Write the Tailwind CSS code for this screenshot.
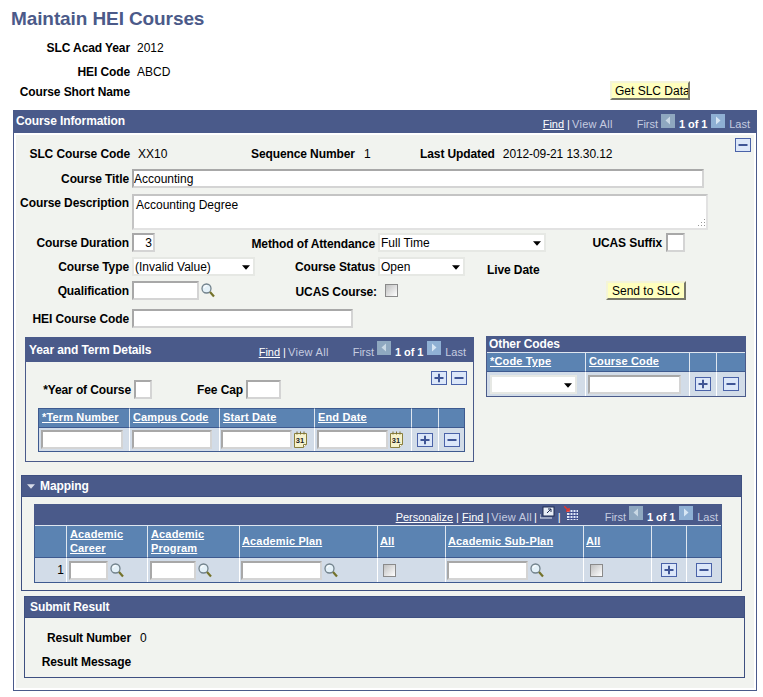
<!DOCTYPE html>
<html lang="en">
<head>
  <meta charset="UTF-8">
  <title>Maintain HEI Courses</title>
  <script src="https://cdn.jsdelivr.net/npm/@tailwindcss/browser@4"></script>
</head>
<body class="bg-white w-[763px] h-[697px] overflow-hidden font-['Liberation_Sans',Arial,sans-serif] text-xs leading-[14px] text-black [&_.font-bold]:tracking-[-0.1px] [&_thead]:text-[11px] [&_thead.font-bold]:tracking-[0.15px] [&_th]:pb-[2px]">

<svg class="hidden">
  <symbol id="mag" viewBox="0 0 14 15">
    <circle cx="5.5" cy="5.5" r="4.5" fill="#e4f1f8" stroke="#72828c" stroke-width="1.3"/>
    <path d="M3 5a3 3 0 0 1 3-2.500" fill="none" stroke="#fff"/>
    <path d="M9 9l4 4.500" stroke="#74722a" stroke-width="2.200"/>
  </symbol>
  <symbol id="plus" viewBox="0 0 16 14">
    <rect x=".5" y=".5" width="15" height="13" fill="#dce7f9" stroke="#4a62a8"/>
    <path d="M3.500 7h9M8 2.800v8.400" stroke="#3f5596" stroke-width="2"/>
  </symbol>
  <symbol id="minus" viewBox="0 0 16 14">
    <rect x=".5" y=".5" width="15" height="13" fill="#dce7f9" stroke="#4a62a8"/>
    <path d="M3.500 7h9" stroke="#3f5596" stroke-width="2"/>
  </symbol>
  <symbol id="prev" viewBox="0 0 14 14">
    <rect width="14" height="14" fill="#8fa8c0"/>
    <path d="M9 2.500v8l-4.500-4z" fill="#c9d8e4"/>
  </symbol>
  <symbol id="next" viewBox="0 0 14 14">
    <rect width="14" height="14" fill="#8fb0d4"/>
    <path d="M5 2.500v8l4.500-4z" fill="#d7e6f4"/>
  </symbol>
  <symbol id="down" viewBox="0 0 9 5">
    <path d="M0 0h9l-4.500 5z" fill="#000"/>
  </symbol>
  <symbol id="cal" viewBox="0 0 13 17">
    <path d="M.5 2.500h12v11l-3 3H.5z" fill="#f6f2cc" stroke="#8a7f3e"/>
    <path d="M3 .5v3M6.500 .5v3M10 .5v3" stroke="#7a6f34"/>
    <path d="M9.500 16.500v-3h3" fill="#fff" stroke="#8a7f3e"/>
    <text x="6" y="12" text-anchor="middle" font-size="7.500" font-weight="700" fill="#222">31</text>
  </symbol>
</svg>

<h1 class="pl-[11px] pt-[8px] h-[41px] text-[19px] leading-[21px] font-bold text-[#4b5a89]">Maintain HEI Courses</h1>

<div class="flex h-[24px]"><span class="w-[130px] text-right font-bold">SLC Acad Year</span><span class="ml-[7px]">2012</span></div>
<div class="flex h-[16px]"><span class="w-[130px] text-right font-bold">HEI Code</span><span class="ml-[7px]">ABCD</span></div>
<div class="flex h-[29px] items-start">
  <span class="w-[130px] mt-[4px] text-right font-bold">Course Short Name</span>
  <button class="ml-[480px] w-[80px] h-[19px] pl-[3px] text-left overflow-hidden whitespace-nowrap bg-[#ffffbe] border-2 border-t-[#f4f4d8] border-l-[#f4f4d8] border-r-[#77776a] border-b-[#77776a]">Get SLC Data</button>
</div>

<!-- Course Information -->
<section class="ml-[13px] w-[744px] h-[581px] border-x border-b border-[#4a5a8a]">
  <header class="-mx-px h-[23px] bg-[#4a5a8a] flex text-white">
    <span class="pl-[3px] pt-[4px] font-bold">Course Information</span>
    <nav class="ml-auto mr-[7px] mt-[7px] flex items-start text-[11px] leading-[14px] text-[#c6cce0]">
      <a class="underline text-white">Find</a><span class="ml-[3px] text-white">|</span><span class="ml-[2px] tracking-[0.3px]">View All</span>
      <span class="ml-[24px]">First</span><svg class="ml-[3px] -mt-[3px] w-[14px] h-[14px]"><use href="#prev"/></svg>
      <span class="ml-[4px] font-bold text-white">1 of 1</span><svg class="ml-[4px] -mt-[3px] w-[14px] h-[14px]"><use href="#next"/></svg>
      <span class="ml-[4px]">Last</span>
    </nav>
  </header>

  <div class="mx-[2px] mt-[2px] h-[553px] bg-[#f1f3ef]">
    <div class="flex h-[34px] pt-[3px]">
      <span class="w-[114px] mt-[9px] text-right font-bold">SLC Course Code</span>
      <span class="w-[121px] mt-[9px] pl-[8px]">XX10</span>
      <span class="w-[169px] mt-[9px] font-bold">Sequence Number<span class="ml-[9px] font-normal">1</span></span>
      <span class="w-[315px] mt-[9px] font-bold">Last Updated<span class="ml-[8px] font-normal">2012-09-21 13.30.12</span></span>
      <svg class="w-[16px] h-[14px]"><use href="#minus"/></svg>
    </div>

    <div class="flex items-center h-[19px]">
      <label class="w-[113px] text-right font-bold">Course Title</label>
      <input value="Accounting" class="ml-[3px] w-[572px] h-[19px] border-2 border-t-[#a8a8a8] border-l-[#a8a8a8] border-r-[#d4d4d4] border-b-[#d4d4d4] bg-white">
    </div>

    <div class="flex mt-[6px] h-[36px]">
      <label class="w-[113px] mt-[2px] text-right font-bold">Course Description</label>
      <div class="relative ml-[3px] w-[576px] h-[36px] pl-[2px] pt-[2px] border-2 border-t-[#c4c4c4] border-l-[#c4c4c4] border-r-[#e2e2e2] border-b-[#e2e2e2] bg-white">Accounting Degree
        <svg class="absolute right-0 bottom-0 w-[10px] h-[10px]" viewBox="0 0 10 10"><path d="M8 1h1v1H8zM5 4h1v1H5zM8 4h1v1H8zM2 7h1v1H2zM5 7h1v1H5zM8 7h1v1H8z" fill="#999"/></svg>
      </div>
    </div>

    <div class="flex items-center mt-[3px] h-[19px]">
      <label class="w-[113px] text-right font-bold">Course Duration</label>
      <input value="3" class="ml-[3px] w-[23px] h-[19px] pr-[1px] text-right border-2 border-t-[#a8a8a8] border-l-[#a8a8a8] border-r-[#d4d4d4] border-b-[#d4d4d4] bg-white">
      <label class="w-[220px] mt-[2px] text-right font-bold">Method of Attendance</label>
      <div class="relative ml-[3px] w-[168px] h-[19px]">
        <select class="appearance-none w-full h-full pl-[1px] border-2 border-[#e6e8e4] bg-white"><option>Full Time</option></select>
        <svg class="absolute right-[5px] top-[8px] w-[8px] h-[5px]"><use href="#down"/></svg>
      </div>
      <label class="w-[116px] text-right font-bold">UCAS Suffix</label>
      <input class="ml-[4px] w-[19px] h-[19px] border-2 border-t-[#a8a8a8] border-l-[#a8a8a8] border-r-[#d4d4d4] border-b-[#d4d4d4] bg-white">
    </div>

    <div class="flex items-center mt-[5px] h-[19px]">
      <label class="w-[113px] text-right font-bold">Course Type</label>
      <div class="relative ml-[3px] w-[123px] h-[19px]">
        <select class="appearance-none w-full h-full pl-[1px] border-2 border-[#e6e8e4] bg-white"><option>(Invalid Value)</option></select>
        <svg class="absolute right-[5px] top-[8px] w-[8px] h-[5px]"><use href="#down"/></svg>
      </div>
      <label class="w-[120px] text-right font-bold">Course Status</label>
      <div class="relative ml-[3px] w-[87px] h-[19px]">
        <select class="appearance-none w-full h-full pl-[1px] border-2 border-[#e6e8e4] bg-white"><option>Open</option></select>
        <svg class="absolute right-[5px] top-[8px] w-[8px] h-[5px]"><use href="#down"/></svg>
      </div>
      <label class="ml-[22px] mt-[7px] font-bold">Live Date</label>
    </div>

    <div class="flex items-center mt-[5px] h-[19px]">
      <label class="w-[113px] text-right font-bold">Qualification</label>
      <input class="ml-[3px] w-[67px] h-[19px] border-2 border-t-[#a8a8a8] border-l-[#a8a8a8] border-r-[#d4d4d4] border-b-[#d4d4d4] bg-white">
      <svg class="ml-[2px] w-[14px] h-[15px]"><use href="#mag"/></svg>
      <label class="w-[162px] mt-[2px] text-right font-bold">UCAS Course:</label>
      <input type="checkbox" class="appearance-none ml-[8px] w-[13px] h-[13px] border border-[#8a8a8a] bg-linear-to-br from-[#c0c0c0] to-white">
      <button class="ml-[208px] w-[80px] h-[19px] bg-[#ffffbe] border-2 border-t-[#f4f4d8] border-l-[#f4f4d8] border-r-[#77776a] border-b-[#77776a]">Send to SLC</button>
    </div>

    <div class="flex items-center mt-[9px] h-[19px]">
      <label class="w-[113px] text-right font-bold">HEI Course Code</label>
      <input class="ml-[3px] w-[221px] h-[19px] border-2 border-t-[#a8a8a8] border-l-[#a8a8a8] border-r-[#d4d4d4] border-b-[#d4d4d4] bg-white">
    </div>

    <div class="flex items-start mt-[8px] h-[126px]">
      <!-- Year and Term Details -->
      <section class="ml-[9px] mt-[1px] w-[449px] h-[125px] border border-[#4a5a8a]">
        <header class="h-[24px] bg-[#4a5a8a] flex text-white">
          <span class="pl-[3px] pt-[5px] font-bold">Year and Term Details</span>
          <nav class="ml-auto mr-[7px] mt-[7px] flex items-start text-[11px] leading-[14px] text-[#c6cce0]">
            <a class="underline text-white">Find</a><span class="ml-[3px] text-white">|</span><span class="ml-[2px] tracking-[0.3px]">View All</span>
            <span class="ml-[24px]">First</span><svg class="ml-[3px] -mt-[4px] w-[14px] h-[14px]"><use href="#prev"/></svg>
            <span class="ml-[4px] font-bold text-white">1 of 1</span><svg class="ml-[4px] -mt-[4px] w-[14px] h-[14px]"><use href="#next"/></svg>
            <span class="ml-[4px]">Last</span>
          </nav>
        </header>
        <div class="flex justify-end gap-[4px] pr-[6px] pt-[9px] h-[23px]">
          <svg class="w-[16px] h-[14px]"><use href="#plus"/></svg>
          <svg class="w-[16px] h-[14px]"><use href="#minus"/></svg>
        </div>
        <div class="flex items-center -mt-[5px] h-[19px]">
          <label class="w-[105px] text-right font-bold">*Year of Course</label>
          <input class="ml-[3px] w-[18px] h-[19px] border-2 border-t-[#a8a8a8] border-l-[#a8a8a8] border-r-[#d4d4d4] border-b-[#d4d4d4] bg-white">
          <label class="w-[91px] text-right font-bold">Fee Cap</label>
          <input class="ml-[3px] w-[35px] h-[19px] border-2 border-t-[#a8a8a8] border-l-[#a8a8a8] border-r-[#d4d4d4] border-b-[#d4d4d4] bg-white">
        </div>
        <table class="ml-[12px] mt-[9px] w-[427px] table-fixed border-separate border-spacing-0 border-x border-b border-[#3e5a8f]">
          <colgroup><col class="w-[91px]"><col class="w-[90px]"><col class="w-[95px]"><col class="w-[97px]"><col class="w-[27px]"><col></colgroup>
          <thead class="bg-[#5b83b2] text-white font-bold">
            <tr class="h-[20px]">
              <th class="pl-[3px] text-left border-y border-r border-y-[#3e5a8f] border-r-[#dfe6ef]"><a class="underline">*Term Number</a></th>
              <th class="pl-[3px] text-left border-y border-r border-y-[#3e5a8f] border-r-[#dfe6ef]"><a class="underline">Campus Code</a></th>
              <th class="pl-[3px] text-left border-y border-r border-y-[#3e5a8f] border-r-[#dfe6ef]"><a class="underline">Start Date</a></th>
              <th class="pl-[3px] text-left border-y border-r border-y-[#3e5a8f] border-r-[#dfe6ef]"><a class="underline">End Date</a></th>
              <th class="border-y border-r border-y-[#3e5a8f] border-r-[#dfe6ef]"></th>
              <th class="border-y border-y-[#3e5a8f]"></th>
            </tr>
          </thead>
          <tbody class="bg-[#d2dce8]">
            <tr class="h-[23px]">
              <td class="pl-[2px] border-r border-white"><input class="block w-[82px] h-[19px] border-2 border-t-[#a8a8a8] border-l-[#a8a8a8] border-r-[#d4d4d4] border-b-[#d4d4d4] bg-white"></td>
              <td class="pl-[2px] border-r border-white"><input class="block w-[80px] h-[19px] border-2 border-t-[#a8a8a8] border-l-[#a8a8a8] border-r-[#d4d4d4] border-b-[#d4d4d4] bg-white"></td>
              <td class="pl-[1px] border-r border-white">
                <div class="flex items-center">
                  <input class="block w-[71px] h-[19px] border-2 border-t-[#a8a8a8] border-l-[#a8a8a8] border-r-[#d4d4d4] border-b-[#d4d4d4] bg-white">
                  <svg class="ml-[2px] w-[13px] h-[17px]"><use href="#cal"/></svg>
                </div>
              </td>
              <td class="pl-[2px] border-r border-white">
                <div class="flex items-center">
                  <input class="block w-[71px] h-[19px] border-2 border-t-[#a8a8a8] border-l-[#a8a8a8] border-r-[#d4d4d4] border-b-[#d4d4d4] bg-white">
                  <svg class="ml-[2px] w-[13px] h-[17px]"><use href="#cal"/></svg>
                </div>
              </td>
              <td class="border-r border-white"><svg class="mx-auto w-[16px] h-[14px]"><use href="#plus"/></svg></td>
              <td><svg class="mx-auto w-[16px] h-[14px]"><use href="#minus"/></svg></td>
            </tr>
          </tbody>
        </table>
      </section>

      <!-- Other Codes -->
      <section class="ml-[12px] w-[260px] border-x border-b border-[#4a5a8a]">
        <header class="-mx-px h-[16px] bg-[#4a5a8a] pl-[3px] pt-[1px] text-white font-bold">Other Codes</header>
        <table class="w-full table-fixed border-separate border-spacing-0">
          <colgroup><col class="w-[99px]"><col class="w-[104px]"><col class="w-[27px]"><col></colgroup>
          <thead class="bg-[#5b83b2] text-white font-bold">
            <tr class="h-[20px]">
              <th class="pl-[3px] text-left border-y border-r border-t-[#dfe6ef] border-b-[#3e5a8f] border-r-[#dfe6ef]"><a class="underline">*Code Type</a></th>
              <th class="pl-[3px] text-left border-y border-r border-t-[#dfe6ef] border-b-[#3e5a8f] border-r-[#dfe6ef]"><a class="underline">Course Code</a></th>
              <th class="border-y border-r border-t-[#dfe6ef] border-b-[#3e5a8f] border-r-[#dfe6ef]"></th>
              <th class="border-y border-t-[#dfe6ef] border-b-[#3e5a8f]"></th>
            </tr>
          </thead>
          <tbody class="bg-[#d2dce8]">
            <tr class="h-[24px]">
              <td class="pl-[3px] border-r border-white">
                <div class="relative w-[87px] h-[19px]">
                  <select class="block appearance-none w-full h-full border-2 border-[#e6e8e4] bg-white"></select>
                  <svg class="absolute right-[5px] top-[8px] w-[8px] h-[5px]"><use href="#down"/></svg>
                </div>
              </td>
              <td class="pl-[2px] border-r border-white"><input class="block w-[93px] h-[19px] border-2 border-t-[#a8a8a8] border-l-[#a8a8a8] border-r-[#d4d4d4] border-b-[#d4d4d4] bg-white"></td>
              <td class="border-r border-white"><svg class="mx-auto w-[16px] h-[14px]"><use href="#plus"/></svg></td>
              <td><svg class="mx-auto w-[16px] h-[14px]"><use href="#minus"/></svg></td>
            </tr>
          </tbody>
        </table>
      </section>
    </div>

    <!-- Mapping -->
    <section class="ml-[5px] mt-[13px] w-[721px] h-[116px] border-x border-b border-[#3e4f80]">
      <header class="-mx-px h-[22px] bg-[#4a5a8a] border border-[#3e4f80] flex items-center text-white font-bold">
        <svg class="ml-[5px] w-[8px] h-[5px]" viewBox="0 0 9 5"><path d="M0 0h9l-4.500 5z" fill="#d8dce8"/></svg>
        <span class="ml-[5px]">Mapping</span>
      </header>
      <div class="ml-[12px] mt-[7px] w-[688px]">
        <div class="h-[21px] bg-[#4a5a8a] flex">
          <nav class="ml-auto mr-[4px] mt-[6px] flex items-start text-[11px] leading-[14px] text-[#c6cce0]">
            <a class="underline text-white">Personalize</a><span class="ml-[3px] text-white">|</span><a class="ml-[3px] underline text-white">Find</a><span class="ml-[3px] text-white">|</span><span class="ml-[2px] tracking-[0.3px]">View All</span><span class="ml-[2px] text-white">|</span>
            <svg class="ml-[3px] -mt-[4px] w-[15px] h-[14px]" viewBox="0 0 15 14"><rect x="3" y="1" width="11" height="9" fill="#e8eef6" stroke="#1c2a50"/><path d="M7 7l4-4M8 3h3v3" stroke="#1c2a50" fill="none"/><path d="M0 8v4h12" stroke="#e8eef6" fill="none"/></svg>
            <span class="ml-[3px] text-white">|</span>
            <svg class="ml-[3px] -mt-[4px] w-[14px] h-[14px]" viewBox="0 0 14 14"><path d="M3 4h11v10H3z" fill="#e0e8f8"/><path d="M3 6.500h11M3 9.500h11M3 12.500h11M6 4v10M9 4v10M12 4v10" stroke="#3e4f90"/><path d="M0 0l5 5M5 2v3H2" stroke="#e3342a" stroke-width="1.500" fill="none"/></svg>
            <span class="ml-[27px]">First</span><svg class="ml-[3px] -mt-[4px] w-[14px] h-[14px]"><use href="#prev"/></svg>
            <span class="ml-[4px] font-bold text-white">1 of 1</span><svg class="ml-[4px] -mt-[4px] w-[14px] h-[14px]"><use href="#next"/></svg>
            <span class="ml-[4px]">Last</span>
          </nav>
        </div>
        <table class="w-full table-fixed border-separate border-spacing-0 border-x border-b border-[#3e5a8f]">
          <colgroup><col class="w-[32px]"><col class="w-[81px]"><col class="w-[92px]"><col class="w-[138px]"><col class="w-[68px]"><col class="w-[138px]"><col class="w-[68px]"><col class="w-[35px]"><col></colgroup>
          <thead class="bg-[#5b83b2] text-white font-bold">
            <tr class="h-[33px]">
              <th class="border-t border-b border-r border-t-[#dfe6ef] border-b-[#3e5a8f] border-r-[#dfe6ef]"></th>
              <th class="pl-[3px] text-left border-t border-b border-r border-t-[#dfe6ef] border-b-[#3e5a8f] border-r-[#dfe6ef]"><a class="underline">Academic Career</a></th>
              <th class="pl-[3px] text-left border-t border-b border-r border-t-[#dfe6ef] border-b-[#3e5a8f] border-r-[#dfe6ef]"><a class="underline">Academic Program</a></th>
              <th class="pl-[2px] text-left border-t border-b border-r border-t-[#dfe6ef] border-b-[#3e5a8f] border-r-[#dfe6ef]"><a class="underline">Academic Plan</a></th>
              <th class="pl-[2px] text-left border-t border-b border-r border-t-[#dfe6ef] border-b-[#3e5a8f] border-r-[#dfe6ef]"><a class="underline">All</a></th>
              <th class="pl-[2px] text-left border-t border-b border-r border-t-[#dfe6ef] border-b-[#3e5a8f] border-r-[#dfe6ef]"><a class="underline">Academic Sub-Plan</a></th>
              <th class="pl-[2px] text-left border-t border-b border-r border-t-[#dfe6ef] border-b-[#3e5a8f] border-r-[#dfe6ef]"><a class="underline">All</a></th>
              <th class="border-t border-b border-r border-t-[#dfe6ef] border-b-[#3e5a8f] border-r-[#dfe6ef]"></th>
              <th class="border-t border-b border-t-[#dfe6ef] border-b-[#3e5a8f]"></th>
            </tr>
          </thead>
          <tbody class="bg-[#d2dce8]">
            <tr class="h-[24px]">
              <td class="pr-[2px] text-right border-r border-white">1</td>
              <td class="pl-[2px] border-r border-white"><div class="flex items-center"><input class="block w-[39px] h-[19px] border-2 border-t-[#a8a8a8] border-l-[#a8a8a8] border-r-[#d4d4d4] border-b-[#d4d4d4] bg-white"><svg class="ml-[2px] w-[14px] h-[15px]"><use href="#mag"/></svg></div></td>
              <td class="pl-[2px] border-r border-white"><div class="flex items-center"><input class="block w-[46px] h-[19px] border-2 border-t-[#a8a8a8] border-l-[#a8a8a8] border-r-[#d4d4d4] border-b-[#d4d4d4] bg-white"><svg class="ml-[2px] w-[14px] h-[15px]"><use href="#mag"/></svg></div></td>
              <td class="pl-[1px] border-r border-white"><div class="flex items-center"><input class="block w-[81px] h-[19px] border-2 border-t-[#a8a8a8] border-l-[#a8a8a8] border-r-[#d4d4d4] border-b-[#d4d4d4] bg-white"><svg class="ml-[2px] w-[14px] h-[15px]"><use href="#mag"/></svg></div></td>
              <td class="pl-[5px] border-r border-white"><input type="checkbox" class="block appearance-none w-[13px] h-[13px] border border-[#8a8a8a] bg-linear-to-br from-[#c0c0c0] to-white"></td>
              <td class="pl-[1px] border-r border-white"><div class="flex items-center"><input class="block w-[81px] h-[19px] border-2 border-t-[#a8a8a8] border-l-[#a8a8a8] border-r-[#d4d4d4] border-b-[#d4d4d4] bg-white"><svg class="ml-[2px] w-[14px] h-[15px]"><use href="#mag"/></svg></div></td>
              <td class="pl-[6px] border-r border-white"><input type="checkbox" class="block appearance-none w-[13px] h-[13px] border border-[#8a8a8a] bg-linear-to-br from-[#c0c0c0] to-white"></td>
              <td class="border-r border-white"><svg class="mx-auto w-[16px] h-[14px]"><use href="#plus"/></svg></td>
              <td><svg class="mx-auto w-[16px] h-[14px]"><use href="#minus"/></svg></td>
            </tr>
          </tbody>
        </table>
      </div>
    </section>

    <!-- Submit Result -->
    <section class="ml-[8px] mt-[5px] w-[721px] h-[82px] border-x border-b border-[#3e4f80]">
      <header class="-mx-px h-[22px] bg-[#4a5a8a] border border-[#3e4f80] pl-[5px] pt-[3px] text-white font-bold">Submit Result</header>
      <div class="flex mt-[13px] h-[24px]"><span class="w-[106px] text-right font-bold">Result Number</span><span class="ml-[9px]">0</span></div>
      <div class="flex"><span class="w-[106px] text-right font-bold">Result Message</span></div>
    </section>
  </div>
</section>

</body>
</html>
